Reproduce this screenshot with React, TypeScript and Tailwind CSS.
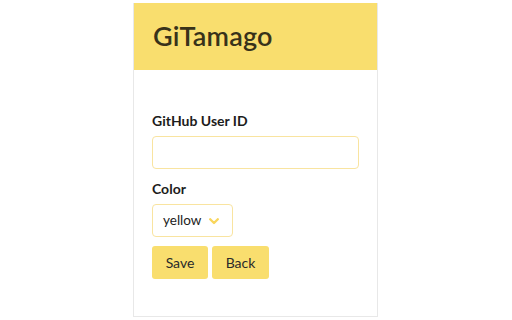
export default function App() {
    return (
        <div className="w-[512px] h-[320px] bg-white pl-[133px] font-['Lato',sans-serif]">
            <div className="mt-[3px] w-[245px] h-[314px] border border-[#e8e8e8] border-t-0 flex flex-col">
                {/* Header */}
                <div className="h-[67px] bg-[#f9de6e] flex items-center px-[19px]">
                    <h1 className="text-[27px] font-semibold text-[#38321a] tracking-[0.2px]">GiTamago</h1>
                </div>

                {/* Form */}
                <div className="px-[18px] pt-[42px] flex flex-col">
                    <label className="text-[14px] font-bold text-[#1c1c1c] leading-[18px]">GitHub User ID</label>
                    <input className="mt-[6px] h-[33px] w-full rounded-[4px] border border-[#f9e4a0] outline-none" />

                    <label className="mt-[11px] text-[14px] font-bold text-[#1c1c1c] leading-[18px]">Color</label>
                    <div className="mt-[6px] h-[33px] w-[81px] rounded-[4px] border border-[#f9e4a0] flex items-center pl-[10px] gap-[8px]">
                        <span className="text-[13.5px] text-[#222]">yellow</span>
                        <svg width="10" height="7" viewBox="0 0 10 7" className="mt-[1px]">
                            <path d="M1.2 1.2 L5 5 L8.8 1.2" fill="none" stroke="#f9d65c" strokeWidth="2.3" strokeLinecap="round" strokeLinejoin="round" />
                        </svg>
                    </div>

                    <div className="mt-[9px] flex gap-[4px]">
                        <button className="h-[33px] w-[56px] rounded-[3px] bg-[#f9de6e] text-[14px] text-[#2a2a2a]">Save</button>
                        <button className="h-[33px] w-[57px] rounded-[3px] bg-[#f9de6e] text-[14px] text-[#2a2a2a]">Back</button>
                    </div>
                </div>
            </div>
        </div>
    );
}
